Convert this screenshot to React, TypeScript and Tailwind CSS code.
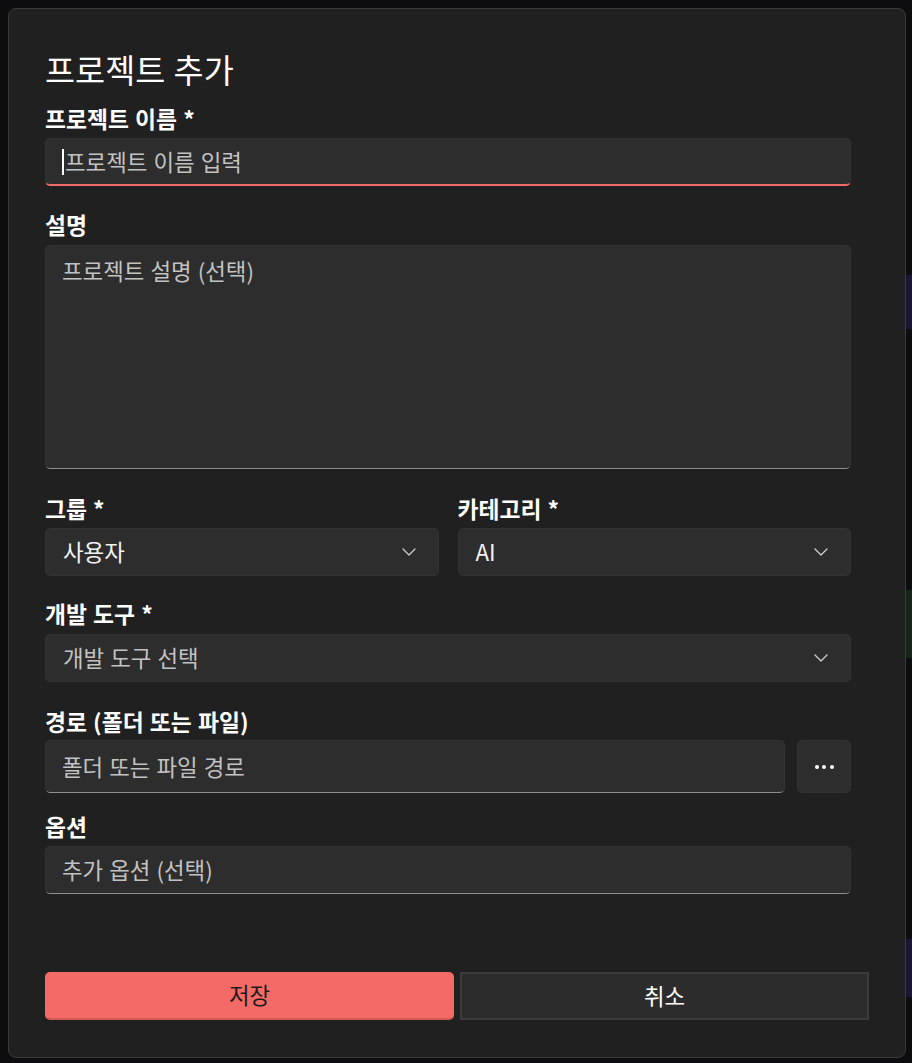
import { ChevronDown } from 'lucide-react';

function Label({ children }: { children: React.ReactNode }) {
  return (
    <div className="flex h-[30px] items-center text-[22.8px] font-semibold leading-none text-white">
      {children}
    </div>
  );
}

function Select({ value, placeholder }: { value?: string; placeholder?: string }) {
  return (
    <div className="flex h-[48px] items-center justify-between rounded-[5px] border border-[#333333] bg-[#2d2d2d] pl-[17px] pr-[17px]">
      <span className={value ? 'text-[#f2f2f2]' : 'text-[#c2c2c2]'}>{value ?? placeholder}</span>
      <ChevronDown className="h-6 w-6 text-[#d0d0d0]" strokeWidth={1.3} />
    </div>
  );
}

function TextInput({ placeholder, className = '' }: { placeholder: string; className?: string }) {
  return (
    <div
      className={`flex h-full items-center rounded-[5px] border border-[#333333] border-b-[#8e8e8e] bg-[#2d2d2d] pl-[16px] text-[#c2c2c2] ${className}`}
    >
      {placeholder}
    </div>
  );
}

export default function App() {
  return (
    <div className="relative h-[1063px] w-[912px] overflow-hidden bg-[#0d0d0f] pl-[8px] pt-[8px] font-['Noto_Sans_CJK_KR',sans-serif] text-[22.4px] [word-spacing:1px]">
      {/* app content peeking out behind the dialog */}
      <div className="absolute right-0 top-[275px] h-[54px] w-[6px] bg-[#1b1632]" />
      <div className="absolute right-0 top-[590px] h-[68px] w-[6px] bg-[#18261a]" />
      <div className="absolute right-0 top-[939px] h-[58px] w-[6px] bg-[#1b1632]" />

      <div className="relative flex h-[1050px] w-[898px] flex-col rounded-[8px] border border-[#3a3a3a] bg-[#202020] px-[36px] pt-[39px]">
        <h2 className="flex h-[42px] items-center text-[32.7px] font-normal leading-none text-white">프로젝트 추가</h2>

        <div className="mr-[18px] flex flex-col">
          <div className="mt-[14px]">
            <Label>프로젝트 이름 *</Label>
          </div>
          <div className="mt-[4px] flex h-[48px] items-center rounded-[5px] border border-[#333333] border-b-2 border-b-[#f26a68] bg-[#2d2d2d] pl-[16px] text-[#c2c2c2]">
            <span className="mr-[1px] h-[26px] w-[2px] bg-white" />
            프로젝트 이름 입력
          </div>

          <div className="mt-[24px]">
            <Label>설명</Label>
          </div>
          <div className="mt-[5px] h-[224px] rounded-[5px] border border-[#333333] border-b-[#8e8e8e] bg-[#2d2d2d] pl-[16px] pt-[10px] leading-[28px] text-[#c2c2c2]">
            프로젝트 설명 (선택)
          </div>

          <div className="mt-[25px] grid grid-cols-2 gap-x-[19px]">
            <Label>그룹 *</Label>
            <Label>카테고리 *</Label>
            <div className="mt-[4px]">
              <Select value="사용자" />
            </div>
            <div className="mt-[4px]">
              <Select value="AI" />
            </div>
          </div>

          <div className="mt-[23px]">
            <Label>개발 도구 *</Label>
          </div>
          <div className="mt-[5px]">
            <Select placeholder="개발 도구 선택" />
          </div>

          <div className="mt-[25px]">
            <Label>경로 (폴더 또는 파일)</Label>
          </div>
          <div className="mt-[3px] flex h-[53px] gap-[12px]">
            <TextInput placeholder="폴더 또는 파일 경로" className="flex-1" />
            <button className="flex w-[54px] items-center justify-center gap-[3.5px] rounded-[5px] border border-[#333333] bg-[#2d2d2d]">
              <span className="h-[4px] w-[4px] rounded-full bg-white" />
              <span className="h-[4px] w-[4px] rounded-full bg-white" />
              <span className="h-[4px] w-[4px] rounded-full bg-white" />
            </button>
          </div>

          <div className="mt-[19px]">
            <Label>옵션</Label>
          </div>
          <div className="mt-[4px] h-[48px]">
            <TextInput placeholder="추가 옵션 (선택)" />
          </div>
        </div>

        <div className="mt-[78px] flex h-[48px] gap-[6px]">
          <button className="w-[409px] rounded-[5px] border-b-2 border-b-[#d65955] bg-[#f46a66] text-[#1b1b1b]">저장</button>
          <button className="flex-1 border-2 border-[#3c3c3c] bg-[#2c2c2c] text-white">취소</button>
        </div>
      </div>
    </div>
  );
}
